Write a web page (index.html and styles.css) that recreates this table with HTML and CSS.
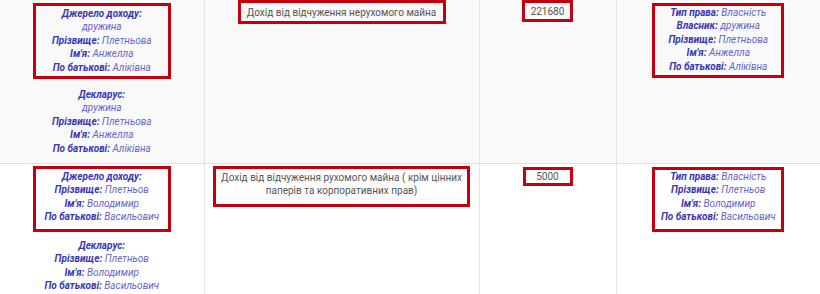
FILE: index.html
```html
<!DOCTYPE html>
<html lang="uk">
<head>
<meta charset="utf-8">
<link rel="stylesheet" href="styles.css">
</head>
<body>
<table class="decl">
  <colgroup>
    <col class="col-a"><col class="col-b"><col class="col-c"><col class="col-d">
  </colgroup>
  <tr class="row row-odd">
    <td class="cell">
      <div class="box box-src box-src-1">
        <b>Джерело доходу:</b><br><i>дружина</i><br>
        <b>Прізвище:</b> <i>Плетньова</i><br>
        <b>Ім'я:</b> <i>Анжелла</i><br>
        <b>По батькові:</b> <i>Аліківна</i>
      </div>
      <div class="declarant">
        <b>Декларус:</b><br><i>дружина</i><br>
        <b>Прізвище:</b> <i>Плетньова</i><br>
        <b>Ім'я:</b> <i>Анжелла</i><br>
        <b>По батькові:</b> <i>Аліківна</i>
      </div>
    </td>
    <td class="cell">
      <div class="box box-type box-type-1">Дохід від відчуження нерухомого майна</div>
    </td>
    <td class="cell">
      <div class="box box-sum box-sum-1">221680</div>
    </td>
    <td class="cell">
      <div class="box box-own box-own-1">
        <b>Тип права:</b> <i>Власність</i><br>
        <b>Власник:</b> <i>дружина</i><br>
        <b>Прізвище:</b> <i>Плетньова</i><br>
        <b>Ім'я:</b> <i>Анжелла</i><br>
        <b>По батькові:</b> <i>Аліківна</i>
      </div>
    </td>
  </tr>
  <tr class="row row-even">
    <td class="cell">
      <div class="box box-src box-src-2">
        <b>Джерело доходу:</b><br>
        <b>Прізвище:</b> <i>Плетньов</i><br>
        <b>Ім'я:</b> <i>Володимир</i><br>
        <b>По батькові:</b> <i>Васильович</i>
      </div>
      <div class="declarant declarant-2">
        <b>Декларус:</b><br>
        <b>Прізвище:</b> <i>Плетньов</i><br>
        <b>Ім'я:</b> <i>Володимир</i><br>
        <b>По батькові:</b> <i>Васильович</i>
      </div>
    </td>
    <td class="cell">
      <div class="box box-type box-type-2">Дохід від відчуження рухомого майна ( крім цінних паперів та корпоративних прав)</div>
    </td>
    <td class="cell">
      <div class="box box-sum box-sum-2">5000</div>
    </td>
    <td class="cell">
      <div class="box box-own box-own-2">
        <b>Тип права:</b> <i>Власність</i><br>
        <b>Прізвище:</b> <i>Плетньов</i><br>
        <b>Ім'я:</b> <i>Володимир</i><br>
        <b>По батькові:</b> <i>Васильович</i>
      </div>
    </td>
  </tr>
</table>
</body>
</html>
```

FILE: styles.css
```css
html, body {
  margin: 0;
  padding: 0;
  background: #ffffff;
}

body {
  font-family: Roboto, "Liberation Sans", sans-serif;
  font-size: 10px;
  line-height: 13.4px;
  color: #555555;
}

.decl {
  border-collapse: collapse;
  table-layout: fixed;
  width: 820px;
}

.col-a { width: 204px; }
.col-b { width: 275px; }
.col-c { width: 137px; }
.col-d { width: 204px; }

.row-odd { background: #f9f9f9; }
.row-even { background: #ffffff; }

.cell {
  vertical-align: top;
  text-align: center;
  padding: 0 0 8px;
  border-left: 1px solid #e4e4e4;
  border-right: 1px solid #e4e4e4;
}

.row-odd .cell { height: 152px; border-bottom: 1px solid #e2e2e2; }
.row-even .cell { height: 140px; }

.cell:first-child { border-left: none; }
.cell:last-child { border-right: none; }

.box {
  display: block;
  margin: 0 auto;
  box-sizing: border-box;
  border: 3px solid #c4000f;
}

b {
  font-weight: 700;
  font-style: italic;
  color: #3737b9;
}

i {
  font-style: italic;
  color: #6464cc;
}

.box-src { width: 138px; }
.box-src-1 { margin-top: 3px; padding: 1px 0 2px; }
.box-src-2 { margin-top: 2px; padding: 1px 0 5px; }

.declarant { margin-top: 9px; }
.declarant-2 { margin-top: 7px; }

.box-type-1 { width: 208px; margin-top: 0; padding: 3px 0 2px; }
.box-type-2 { width: 257px; margin-top: 2px; padding: 2px 0 6px; }

.box-sum-1 { width: 51px; margin-top: 0; padding: 2px 0 1px; }
.box-sum-2 { width: 50px; margin-top: 3px; padding: 0; }

.box-own { width: 132px; }
.box-own-1 { margin-top: 3px; padding: 0 0 2px; }
.box-own-2 { margin-top: 3px; padding: 0 0 5px; }
```
